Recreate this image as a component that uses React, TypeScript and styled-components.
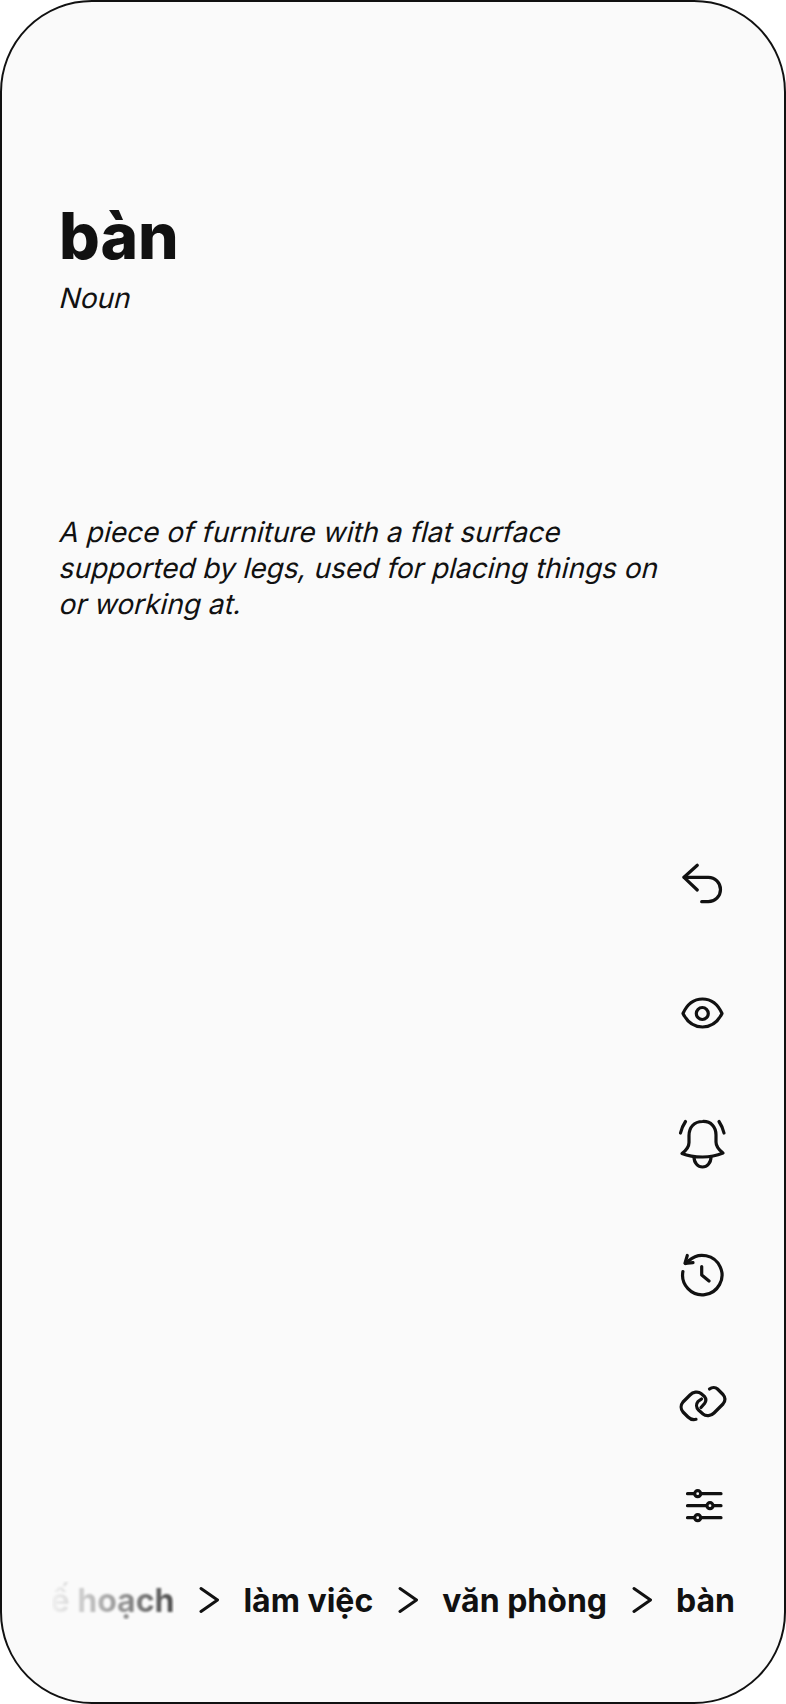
import React from "react";
import styled, { createGlobalStyle } from "styled-components";

const Global = createGlobalStyle`
  html, body { margin: 0; padding: 0; background: #fff; }
  #root { width: 786px; height: 1704px; }
`;

const Frame = styled.main`
  box-sizing: border-box;
  width: 786px;
  height: 1704px;
  border: 2px solid #111;
  border-radius: 92px;
  background: #fafafa;
  color: #111;
  font-family: Inter, "Liberation Sans", sans-serif;
  display: flex;
  flex-direction: column;
  overflow: hidden;
`;

const Head = styled.header`
  padding: 195px 57px 0;
  display: flex;
  flex-direction: column;
`;

const Word = styled.h1`
  margin: 0;
  font-size: 64px;
  line-height: 78px;
  font-weight: 800;
`;

const SkewLine = styled.span`
  display: block;
  transform: skewX(-14deg);
  transform-origin: 0 68%;
`;

const Kind = styled.div`
  margin-top: 6px;
  font-size: 28px;
  line-height: 34px;
`;

const Definition = styled.p`
  margin: 199px 0 0;
  font-size: 28px;
  line-height: 36px;
`;

const Rail = styled.nav`
  margin-top: auto;
  align-self: flex-end;
  margin-right: 54px;
  display: flex;
  flex-direction: column;
  align-items: center;
  width: 56px;
`;

const IconSlot = styled.button<{ $gap: number }>`
  appearance: none;
  border: 0;
  background: none;
  padding: 0;
  color: #111;
  width: 56px;
  height: 56px;
  margin-bottom: ${(p) => p.$gap}px;
  display: flex;
  align-items: center;
  justify-content: center;
  svg {
    display: block;
    width: 56px;
    height: 56px;
    fill: none;
    stroke: currentColor;
    stroke-width: 3.2;
    stroke-linecap: round;
    stroke-linejoin: round;
  }
`;

const Knob = styled.circle`
  fill: #fafafa;
`;

const Crumbs = styled.div`
  margin: 0 49px 80px 50px;
  height: 44px;
  display: flex;
  align-items: center;
  justify-content: flex-end;
  gap: 24px;
  overflow: hidden;
  white-space: nowrap;
  font-size: 32px;
  font-weight: 700;
`;

const Crumb = styled.span`
  flex: none;
`;

const FadedCrumb = styled(Crumb)`
  filter: blur(1.2px);
  -webkit-mask-image: linear-gradient(90deg, transparent 8%, rgba(0, 0, 0, 0.2) 35%, rgba(0, 0, 0, 0.75) 100%);
  mask-image: linear-gradient(90deg, transparent 8%, rgba(0, 0, 0, 0.2) 35%, rgba(0, 0, 0, 0.75) 100%);
`;

const Sep = styled.svg`
  flex: none;
  width: 21px;
  height: 28px;
  fill: none;
  stroke: #111;
  stroke-width: 3;
  stroke-linecap: round;
  stroke-linejoin: round;
`;

const Chevron = () => (
  <Sep viewBox="0 0 21 28"><path d="M3 2.500L19.500 14L3 25.500" /></Sep>
);

export default function App() {
  return (
    <>
      <Global />
      <Frame>
        <Head>
          <Word>bàn</Word>
          <Kind><SkewLine>Noun</SkewLine></Kind>
          <Definition>
            <SkewLine>A piece of furniture with a flat surface</SkewLine>
            <SkewLine>supported by legs, used for placing things on</SkewLine>
            <SkewLine>or working at.</SkewLine>
          </Definition>
        </Head>
        <Rail>
          <IconSlot $gap={74} aria-label="Back">
            <svg viewBox="0 0 56 56"><path d="M23.300 8.300L10 20.300L23.300 33" /><path d="M10 20.300H34.300a12.200 12.200 0 0 1 0 24.400H27.700" /></svg>
          </IconSlot>
          <IconSlot $gap={74} aria-label="View">
            <svg viewBox="0 1.500 56 56"><path d="M9 28C13 19 20 13.500 28.500 13.500S44 19 48 28C44 36 37 41.500 28.500 41.500S13 36 9 28Z" /><circle cx="28.300" cy="28" r="6" /></svg>
          </IconSlot>
          <IconSlot $gap={74} aria-label="Reminders">
            <svg viewBox="4 17 56 56"><path d="M32.500 21.500c-8.500 0-13.500 6-13.500 14v7c0 4-3 8-7 11 6 2.500 13 3.500 20.500 3.500S47 55.500 53 53c-4-3-7-7-7-11v-7c0-8-5-14-13.500-13.500Z" /><path d="M24 57c0 6 4 10 8.500 10s8.500-4 8.500-10" /><path d="M15.500 21.500c-2 3-4 7-5 11.500" /><path d="M49 21.500c2 3 4 7 5 11.500" /></svg>
          </IconSlot>
          <IconSlot $gap={74} aria-label="History">
            <svg viewBox="24 27 56 56"><path d="M32.900 51.500A19.700 19.700 0 1 0 39 40.500L35.500 43.500" /><path d="M37.300 35.500L35 43.300l8-.6" /><path d="M51.700 46.500V55l7.300 6" /></svg>
          </IconSlot>
          <IconSlot $gap={45} aria-label="Link">
            <svg viewBox="4 7 56 56">
              <path d="M26 49.300C23 50 20 49 18 47L13 42C10.500 39 10.500 35 13 32L20 25C23 22 28 21 31 23.500L34.500 26.500C36.500 29 36 31.500 34.500 33.500L31 37.500" />
              <path d="M39.500 19C42 17 45.500 17 47.500 19L53 24.500C55.500 27.500 55.500 31 53 34L44 43C41 46 36 46.500 33 44L28.500 40C26 37.500 26 34 28 31.500L31.500 29" />
            </svg>
          </IconSlot>
          <IconSlot $gap={44} aria-label="Settings">
            <svg viewBox="24 258 56 56"><path d="M37.500 273.700H71M37.500 285.700H71M37.500 297.700H71" /><Knob cx="47.700" cy="273.700" r="3" /><Knob cx="60" cy="285.700" r="3" /><Knob cx="47.700" cy="297.700" r="3" /></svg>
          </IconSlot>
        </Rail>
        <Crumbs>
          <FadedCrumb>kế hoạch</FadedCrumb>
          <Chevron />
          <Crumb>làm việc</Crumb>
          <Chevron />
          <Crumb>văn phòng</Crumb>
          <Chevron />
          <Crumb>bàn</Crumb>
        </Crumbs>
      </Frame>
    </>
  );
}
